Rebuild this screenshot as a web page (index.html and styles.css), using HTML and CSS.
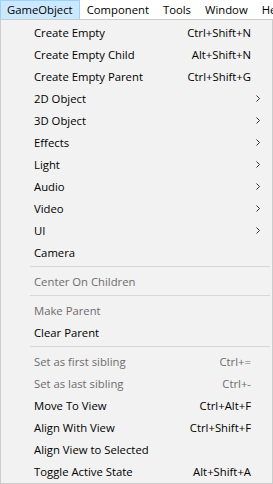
FILE: index.html
```html
<!DOCTYPE html>
<html>
<head>
<meta charset="utf-8">
<link rel="stylesheet" href="styles.css">
</head>
<body>
<div class="menubar">
  <div class="mb-item active">GameObject</div>
  <div class="mb-item">Component</div>
  <div class="mb-item">Tools</div>
  <div class="mb-item">Window</div>
  <div class="mb-item">Help</div>
</div>
<div class="menu">
  <div class="row"><span class="label">Create Empty</span><span class="key">Ctrl+Shift+N</span><span class="sub"></span></div>
  <div class="row"><span class="label">Create Empty Child</span><span class="key">Alt+Shift+N</span><span class="sub"></span></div>
  <div class="row"><span class="label">Create Empty Parent</span><span class="key">Ctrl+Shift+G</span><span class="sub"></span></div>
  <div class="row"><span class="label">2D Object</span><span class="key"></span><span class="sub"><svg width="4" height="7" viewBox="0 0 4 7"><path d="M0.5 0.5 L3.5 3.5 L0.5 6.5" fill="none" stroke="#333" stroke-width="1"/></svg></span></div>
  <div class="row"><span class="label">3D Object</span><span class="key"></span><span class="sub"><svg width="4" height="7" viewBox="0 0 4 7"><path d="M0.5 0.5 L3.5 3.5 L0.5 6.5" fill="none" stroke="#333" stroke-width="1"/></svg></span></div>
  <div class="row"><span class="label">Effects</span><span class="key"></span><span class="sub"><svg width="4" height="7" viewBox="0 0 4 7"><path d="M0.5 0.5 L3.5 3.5 L0.5 6.5" fill="none" stroke="#333" stroke-width="1"/></svg></span></div>
  <div class="row"><span class="label">Light</span><span class="key"></span><span class="sub"><svg width="4" height="7" viewBox="0 0 4 7"><path d="M0.5 0.5 L3.5 3.5 L0.5 6.5" fill="none" stroke="#333" stroke-width="1"/></svg></span></div>
  <div class="row"><span class="label">Audio</span><span class="key"></span><span class="sub"><svg width="4" height="7" viewBox="0 0 4 7"><path d="M0.5 0.5 L3.5 3.5 L0.5 6.5" fill="none" stroke="#333" stroke-width="1"/></svg></span></div>
  <div class="row"><span class="label">Video</span><span class="key"></span><span class="sub"><svg width="4" height="7" viewBox="0 0 4 7"><path d="M0.5 0.5 L3.5 3.5 L0.5 6.5" fill="none" stroke="#333" stroke-width="1"/></svg></span></div>
  <div class="row"><span class="label">UI</span><span class="key"></span><span class="sub"><svg width="4" height="7" viewBox="0 0 4 7"><path d="M0.5 0.5 L3.5 3.5 L0.5 6.5" fill="none" stroke="#333" stroke-width="1"/></svg></span></div>
  <div class="row"><span class="label">Camera</span><span class="key"></span><span class="sub"></span></div>
  <div class="sep"></div>
  <div class="row disabled"><span class="label">Center On Children</span><span class="key"></span><span class="sub"></span></div>
  <div class="sep"></div>
  <div class="row disabled"><span class="label">Make Parent</span><span class="key"></span><span class="sub"></span></div>
  <div class="row"><span class="label">Clear Parent</span><span class="key"></span><span class="sub"></span></div>
  <div class="sep"></div>
  <div class="row disabled"><span class="label">Set as first sibling</span><span class="key">Ctrl+=</span><span class="sub"></span></div>
  <div class="row disabled"><span class="label">Set as last sibling</span><span class="key">Ctrl+-</span><span class="sub"></span></div>
  <div class="row"><span class="label">Move To View</span><span class="key">Ctrl+Alt+F</span><span class="sub"></span></div>
  <div class="row"><span class="label">Align With View</span><span class="key">Ctrl+Shift+F</span><span class="sub"></span></div>
  <div class="row"><span class="label">Align View to Selected</span><span class="key"></span><span class="sub"></span></div>
  <div class="row"><span class="label">Toggle Active State</span><span class="key">Alt+Shift+A</span><span class="sub"></span></div>
</div>
</body>
</html>
```

FILE: styles.css
```css
html, body {
  margin: 0;
  padding: 0;
  background: #ffffff;
  overflow: hidden;
}
body {
  width: 273px;
  height: 484px;
  font-family: "Open Sans", "Noto Sans", sans-serif;
  font-size: 11.3px;
  color: #000;
}
.menubar {
  display: flex;
  height: 19px;
  background: #ffffff;
  white-space: nowrap;
  overflow: hidden;
}
.mb-item {
  height: 18px;
  line-height: 17px;
  padding: 0 6px;
  border: 1px solid transparent;
  border-bottom: none;
  flex-shrink: 0;
}
.mb-item.active {
  background: #cce8ff;
  border-color: #99d1ff;
}
.menu {
  width: 273px;
  box-sizing: border-box;
  background: #f2f2f2;
  border: 1px solid #cccccc;
  padding: 1px 0;
}
.row {
  display: flex;
  align-items: center;
  height: 22px;
  padding-left: 33px;
}
.label {
  flex: 1;
  white-space: nowrap;
}
.key {
  white-space: nowrap;
}
.sub {
  width: 21px;
  display: flex;
  align-items: center;
  padding-left: 5px;
  box-sizing: border-box;
}
.sub svg {
  display: block;
}
.disabled {
  color: #6d6d6d;
}
.sep {
  height: 1px;
  background: #d7d7d7;
  margin: 3px 2px 3px 29px;
}
```
